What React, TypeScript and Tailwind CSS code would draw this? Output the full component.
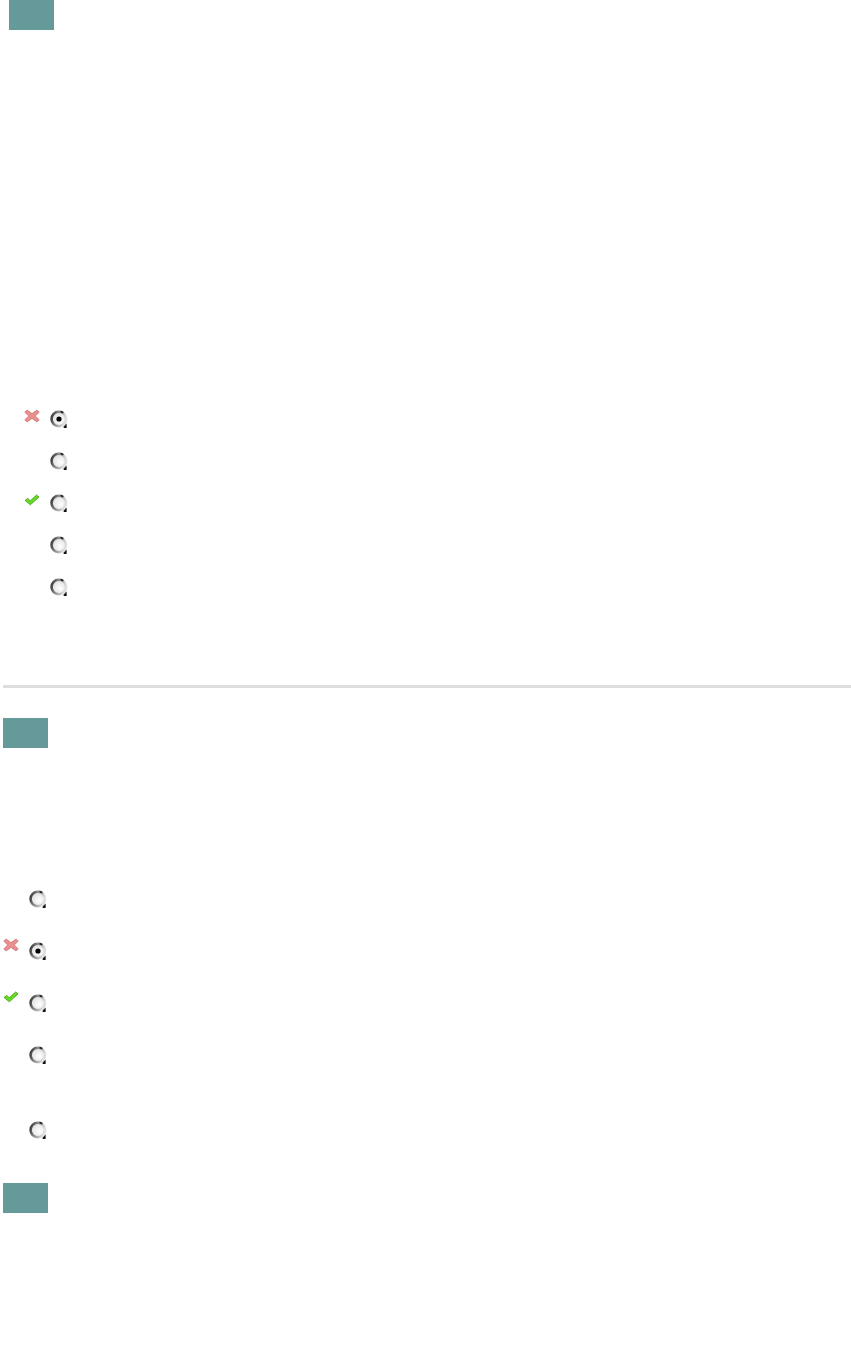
import React from "react";

function Radio({ checked }: { checked?: boolean }) {
  return (
    <svg width="20" height="20" viewBox="0 0 20 20" className="block">
      <defs>
        <linearGradient id="rg" x1="0" y1="0" x2="1" y2="0.3">
          <stop offset="0" stopColor="#2e2e2e" />
          <stop offset="0.45" stopColor="#8a8a8a" />
          <stop offset="1" stopColor="#dedede" />
        </linearGradient>
        <radialGradient id="rf" cx="0.6" cy="0.6" r="0.6">
          <stop offset="0" stopColor="#ffffff" />
          <stop offset="1" stopColor="#e0e0e0" />
        </radialGradient>
      </defs>
      <circle cx="9.8" cy="10" r="7.2" fill="url(#rf)" stroke="url(#rg)" strokeWidth="2.6" />
      <path d="M11.5 1.6 L14.6 2.8 L14.2 4.6 L11.5 3.6 Z" fill="#222" />
      <path d="M15 17.2 L17.6 14.6 L17.6 19 L14.6 19 Z" fill="#111" />
      {checked && <circle cx="10" cy="10" r="2.6" fill="#000" />}
    </svg>
  );
}

function XIcon() {
  return (
    <svg width="16" height="14" viewBox="0 0 16 14" className="block">
      <path
        d="M3 1 L8 4.6 L13 1 L15.2 3.2 L11.2 7 L15.2 10.8 L13 13 L8 9.4 L3 13 L0.8 10.8 L4.8 7 L0.8 3.2 Z"
        fill="#e89090"
        stroke="#cf6a6a"
        strokeWidth="0.7"
        strokeLinejoin="round"
      />
    </svg>
  );
}

function CheckIcon() {
  return (
    <svg width="16" height="14" viewBox="0 0 16 14" className="block">
      <path
        d="M1 7.4 L3.8 5.4 L6.3 7.8 L12.6 2 L15 4 L6.3 11.8 Z"
        fill="#66dd22"
        stroke="#3a9a10"
        strokeWidth="0.8"
        strokeLinejoin="round"
      />
    </svg>
  );
}

function Row1({ icon, checked }: { icon?: "x" | "check"; checked?: boolean }) {
  return (
    <div className="flex h-[42px] items-center">
      <div className="ml-[24px] w-[25px] -mt-[7px]">
        {icon === "x" && <XIcon />}
        {icon === "check" && <CheckIcon />}
      </div>
      <Radio checked={checked} />
    </div>
  );
}

function Row2({ icon, checked, h }: { icon?: "x" | "check"; checked?: boolean; h: string }) {
  return (
    <div className={`flex items-start ${h}`}>
      <div className="ml-[3px] w-[25px] -mt-[3px]">
        {icon === "x" && <XIcon />}
        {icon === "check" && <CheckIcon />}
      </div>
      <Radio checked={checked} />
    </div>
  );
}

export default function App() {
  return (
    <div className="w-[851px] min-h-[1355px] bg-white font-['Liberation_Sans',sans-serif]">
      <div className="ml-[9px] w-[45px] h-[30px] bg-[#669999]" />
      <div className="h-[368px]" />
      <div>
        <Row1 icon="x" checked />
        <Row1 />
        <Row1 icon="check" />
        <Row1 />
        <Row1 />
      </div>
      <div className="h-[77px]" />
      <div className="ml-[3px] h-[3px] bg-[#dddddd]" />
      <div className="h-[30px]" />
      <div className="ml-[3px] w-[45px] h-[30px] bg-[#669999]" />
      <div className="h-[141px]" />
      <div>
        <Row2 h="h-[52px]" />
        <Row2 h="h-[52px]" icon="x" checked />
        <Row2 h="h-[52px]" icon="check" />
        <Row2 h="h-[75px]" />
        <Row2 h="h-[63px]" />
      </div>
      <div className="ml-[3px] w-[45px] h-[30px] bg-[#669999]" />
    </div>
  );
}
